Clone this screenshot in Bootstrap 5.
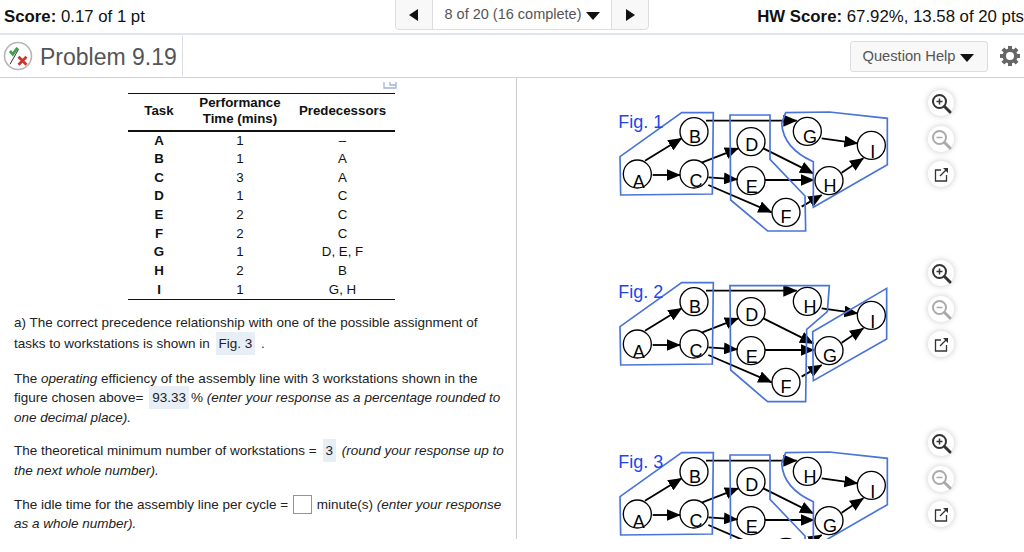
<!DOCTYPE html>
<html lang="en">
<head>
  <meta charset="UTF-8" />
  <title>Problem 9.19</title>
  <link href="https://cdn.jsdelivr.net/npm/bootstrap@5.3.3/dist/css/bootstrap.min.css" rel="stylesheet" />
  <style>
    html, body { margin: 0; height: 552px; overflow: hidden; background: #fff; }
    body { font-family: "Liberation Sans", Arial, sans-serif; color: #222; }
    .score-bar { height: 35px; border-bottom: 2px solid #dfe5ee; padding: 0 0 0 4px; font-size: 16.8px; color: #111; }
    .score-left { width: 391px; }
    .pager { width: 254px; height: 31px; margin-top: -1px; border: 1px solid #ddd; border-radius: 0 0 4px 4px; background: #f8f8f8; font-size: 14.5px; color: #555; }
    .pager-btn { width: 36px; }
    .pager-mid { width: 182px; border-left: 1px solid #ddd; border-right: 1px solid #ddd; background: #fff; }
    .tri-l { border-style: solid; border-width: 6px 9px 6px 0; border-color: transparent #111 transparent transparent; }
    .tri-r { border-style: solid; border-width: 6px 0 6px 9px; border-color: transparent transparent transparent #111; }
    .tri-d { display: inline-block; border-style: solid; border-width: 8px 7px 0 7px; border-color: #111 transparent transparent transparent; margin-left: 4px; vertical-align: -1px; }
    .title-bar { height: 43px; border-bottom: 1px solid #ccd2dc; }
    .title-left { width: 183px; height: 40px; border-right: 1px solid #d8dde5; padding-left: 3px; }
    .title-text { font-size: 23px; color: #555; margin-left: 7px; padding-top: 2px; }
    .help-btn { width: 138px; height: 31px; background: #f8f8f8; border: 1px solid #ddd; border-radius: 3px; font-size: 14.7px; color: #555; margin-right: 11px; padding: 1px 2px 0 0; }
    .gear-box { margin: 0 3px 1px 0; }
    .main-row { height: 461px; overflow: hidden; }
    .left-pane { width: 517px; border-right: 1px solid #ccc; padding: 0 8px 0 14px; font-size: 13.5px; line-height: 19.6px; color: #222; flex: none; position: relative; }
    .resize-mark { position: absolute; left: 383px; top: 3px; }
    .task-table { width: 267px; margin: 15px 0 12px 114px; font-size: 13.3px; line-height: 16px; border-top: 1px solid #111; border-bottom: 1px solid #111; border-collapse: collapse; text-align: center; color: #111; }
    .task-table th { font-weight: 700; padding: 1px 0 3px; border-bottom: 2px solid #111; }
    .task-table td { padding: 0; height: 18.7px; }
    .task-table td:first-child { font-weight: 700; }
    .question-txt { margin: 0 0 14px; }
    .question-first { line-height: 21px; margin-bottom: 15px; }
    .chip { background: #e8eef5; padding: 4px 3px; margin: 0 2px; }
    .blank-box { display: inline-block; width: 19px; height: 19px; border: 1px solid #6ba0c4; vertical-align: -5px; margin: 0 1px; line-height: 1; }
    .right-pane { padding: 11px 0 0 83px; }
    .fig-row { height: 170px; }
    .fig-svg { width: 300px; height: 160px; margin-top: 1px; flex: none; }
    .tool-col { margin: 1px 0 0 28px; gap: 9.5px; }
    .tool-btn { width: 26px; height: 26px; border-radius: 50%; background: #fff; box-shadow: 0 0 6px rgba(0,0,0,.22); }
  </style>
</head>
<body>
  <div class="score-bar d-flex">
    <div class="score-left d-flex align-items-center"><span><b>Score:</b> 0.17 of 1 pt</span></div>
    <div class="pager d-flex align-items-stretch">
      <div class="pager-btn d-flex align-items-center justify-content-center"><span class="tri-l"></span></div>
      <div class="pager-mid d-flex align-items-center justify-content-center"><span>8 of 20 (16 complete)<span class="tri-d"></span></span></div>
      <div class="pager-btn d-flex align-items-center justify-content-center"><span class="tri-r"></span></div>
    </div>
    <div class="flex-grow-1 d-flex align-items-center justify-content-end"><span><b>HW Score:</b> 67.92%, 13.58 of 20 pts</span></div>
  </div>

  <div class="title-bar d-flex align-items-center">
    <div class="title-left d-flex align-items-center">
      <svg width="30" height="30" viewBox="0 0 30 30">
        <circle cx="15" cy="15" r="13.500" fill="#fff" stroke="#b5b5b5" stroke-width="1.600"/>
        <path d="M7 10l2.800 3.300L14.500 6.700" fill="none" stroke="#3f9f4a" stroke-width="2.800"/>
        <path d="M7 23.300L15.500 8.300" stroke="#333" stroke-width="1"/>
        <path d="M15.500 15.800l8 8M23.500 15.800l-8 8" stroke="#d0332c" stroke-width="2.800"/>
      </svg>
      <span class="title-text">Problem 9.19</span>
    </div>
    <div class="flex-grow-1"></div>
    <div class="help-btn d-flex align-items-center justify-content-center"><span>Question Help<span class="tri-d"></span></span></div>
    <svg class="gear-box" width="22" height="22" viewBox="0 0 22 22">
      <g stroke="#666" stroke-width="4">
        <path d="M11 1v20M1 11h20M3.900 3.900l14.200 14.200M18.100 3.900L3.900 18.100"/>
      </g>
      <circle cx="11" cy="11" r="7.500" fill="#666"/>
      <circle cx="11" cy="11" r="4" fill="#fff"/>
    </svg>
  </div>

  <div class="main-row d-flex">
    <div class="left-pane">
      <svg class="resize-mark" width="14" height="10" viewBox="0 0 14 10"><path d="M1 1v6h12V1M7 1v3h6" fill="none" stroke="#9fb3d9" stroke-width="1.300"/></svg>
      <table class="task-table">
        <thead>
          <tr><th style="width:62px">Task</th><th style="width:100px">Performance<br>Time (mins)</th><th>Predecessors</th></tr>
        </thead>
        <tbody>
          <tr><td>A</td><td>1</td><td>–</td></tr>
          <tr><td>B</td><td>1</td><td>A</td></tr>
          <tr><td>C</td><td>3</td><td>A</td></tr>
          <tr><td>D</td><td>1</td><td>C</td></tr>
          <tr><td>E</td><td>2</td><td>C</td></tr>
          <tr><td>F</td><td>2</td><td>C</td></tr>
          <tr><td>G</td><td>1</td><td>D, E, F</td></tr>
          <tr><td>H</td><td>2</td><td>B</td></tr>
          <tr><td>I</td><td>1</td><td>G, H</td></tr>
        </tbody>
      </table>
      <p class="question-txt question-first">a) The correct precedence relationship with one of the possible assignment of tasks to workstations is shown in <span class="chip">Fig. 3</span> .</p>
      <p class="question-txt">The <i>operating</i> efficiency of the assembly line with 3 workstations shown in the figure chosen above= <span class="chip">93.33</span>% <i>(enter your response as a percentage rounded to one decimal place).</i></p>
      <p class="question-txt">The theoretical minimum number of workstations = <span class="chip">3</span> <i>(round your response up to the next whole number).</i></p>
      <p class="question-txt">The idle time for the assembly line per cycle = <span class="blank-box"></span> minute(s) <i>(enter your response as a whole number).</i></p>
    </div>
    <div class="right-pane flex-grow-1" id="figs"></div>
  </div>

<script>
  // node: x, y, text offset x, text offset y (same units as the zoomed figure, 3 = 1px)
  const nodes = {
    A: [112, 252, 4, 42], B: [282, 125, 3, 35], C: [282, 252, 6, 40], D: [453, 155, 2, 27],
    E: [453, 272, 2, 38], F: [558, 367, 0, 31], T: [622, 124, 8, 34], M: [687, 272, 3, 33], I: [814, 166, 4, 37]
  };
  const edges = [
    [135, 212, 245, 145], [158, 255, 240, 255], [318, 92, 590, 92], [305, 218, 415, 175],
    [325, 262, 412, 268], [325, 285, 515, 367], [490, 175, 640, 250], [495, 270, 642, 270],
    [605, 350, 665, 315], [665, 145, 773, 160], [725, 248, 790, 205]
  ];
  const st1 = "M60 200L245 68H340L337 312L62 315Z";
  const st2a = "M390 75H510V208L615 318L617 423H503L392 330Z";
  const st3a = "M557 68L688 66L862 85V224L640 352V215Q550 175 545 100Z";
  const st2b = "M390 77H688L682 155L620 208L617 425H503L392 330Z";
  const st3b = "M860 85V237L640 362L638 215Z";
  const figs = [
    { name: "Fig. 1", top: "G", mid: "H", shapes: [st1, st2a, st3a] },
    { name: "Fig. 2", top: "H", mid: "G", shapes: [st1, st2b, st3b] },
    { name: "Fig. 3", top: "H", mid: "G", shapes: [st1, st2a, st3a] }
  ];
  const icons = [
    '<circle cx="10.500" cy="10.500" r="6.500" fill="none" stroke="#333" stroke-width="2"/><path d="M7.500 10.500h6M10.500 7.500v6" stroke="#333" stroke-width="1.500"/><path d="M15.500 15.500l5.500 5.500" stroke="#333" stroke-width="3" stroke-linecap="round"/>',
    '<circle cx="10.500" cy="10.500" r="6.500" fill="none" stroke="#aaa" stroke-width="2"/><path d="M7.500 10.500h6" stroke="#aaa" stroke-width="1.500"/><path d="M15.500 15.500l5.500 5.500" stroke="#aaa" stroke-width="3" stroke-linecap="round"/>',
    '<path d="M12 8H6.500v11h11v-6" fill="none" stroke="#333" stroke-width="1.300"/><path d="M11 14l6-6" stroke="#333" stroke-width="1.300"/><path d="M14 6h5v5z" fill="#333"/>'
  ];

  let html = "";
  figs.forEach((f, n) => {
    let s = `<svg class="fig-svg" viewBox="0 0 900 480"><defs><marker id="tip${n}" markerUnits="userSpaceOnUse" markerWidth="42" markerHeight="36" refX="40" refY="18" orient="auto"><path d="M0 0L42 18L0 36Z" fill="#000"/></marker></defs>`;
    edges.forEach(e => {
      s += `<line x1="${e[0]}" y1="${e[1]}" x2="${e[2]}" y2="${e[3]}" stroke="#000" stroke-width="5.500" marker-end="url(#tip${n})"/>`;
    });
    f.shapes.forEach(d => { s += `<path d="${d}" fill="none" stroke="#4a74d8" stroke-width="5"/>`; });
    for (const k in nodes) {
      const p = nodes[k];
      const label = k === "T" ? f.top : k === "M" ? f.mid : k;
      s += `<circle cx="${p[0]}" cy="${p[1]}" r="42" fill="none" stroke="#000" stroke-width="4"/>`;
      s += `<text x="${p[0] + p[2]}" y="${p[1] + p[3]}" text-anchor="middle" font-family="Liberation Sans, sans-serif" font-size="54" fill="#000">${label}</text>`;
    }
    s += `<text x="55" y="115" font-family="Liberation Sans, sans-serif" font-size="54" fill="#1f45ee">${f.name}</text></svg>`;
    const tools = icons.map(i => `<div class="tool-btn d-flex align-items-center justify-content-center"><svg width="24" height="24" viewBox="0 0 24 24">${i}</svg></div>`).join("");
    html += `<div class="fig-row d-flex">${s}<div class="tool-col d-flex flex-column">${tools}</div></div>`;
  });
  document.getElementById("figs").innerHTML = html;
</script>
<script src="https://cdn.jsdelivr.net/npm/bootstrap@5.3.3/dist/js/bootstrap.bundle.min.js"></script>
</body>
</html>
